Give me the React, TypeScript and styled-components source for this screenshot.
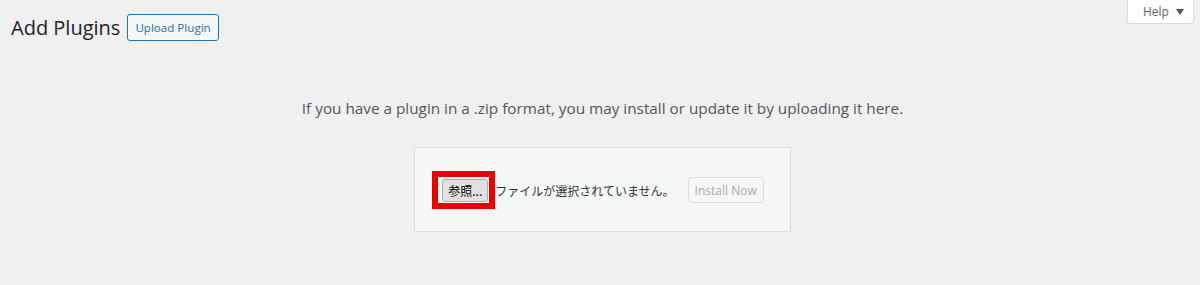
import styled, { createGlobalStyle } from "styled-components";
import type { FC } from "react";

const GlobalStyle = createGlobalStyle`
    body {
        margin: 0;
        background: #f0f0f1;
        font-family: "Open Sans", "Noto Sans CJK JP", sans-serif;
        color: #3c434a;
    }
`;

const Page = styled.div`
    padding: 0 6px 0 11px;
    height: 285px;
    box-sizing: border-box;
`;

const TopBar = styled.div`
    display: flex;
    justify-content: space-between;
    align-items: flex-start;
`;

const TitleGroup = styled.div`
    display: flex;
    align-items: center;
    gap: 7px;
    margin-top: 14px;
`;

const Heading = styled.h1`
    margin: 0;
    font-size: 20px;
    font-weight: 400;
    line-height: 27px;
    color: #1d2327;
`;

const OutlineButton = styled.button`
    height: 27px;
    padding: 0 7px;
    border: 1px solid #2271b1;
    border-radius: 3px;
    background: #f6f7f7;
    color: #2271b1;
    font-family: inherit;
    font-size: 11.6px;
    cursor: pointer;
`;

const HelpTab = styled.button`
    display: flex;
    align-items: center;
    gap: 7px;
    width: 67px;
    height: 24px;
    padding: 0 0 0 15px;
    border: 1px solid #dcdcde;
    border-top: none;
    border-radius: 0 0 4px 4px;
    background: #fff;
    color: #646970;
    font-family: inherit;
    font-size: 12px;
`;

const Caret = styled.span`
    width: 0;
    height: 0;
    border-left: 4px solid transparent;
    border-right: 4px solid transparent;
    border-top: 6px solid #50575e;
`;

const UploadSection = styled.div`
    display: flex;
    flex-direction: column;
    align-items: center;
    padding-top: 55px;
`;

const HelpText = styled.p`
    margin: 0;
    font-size: 15.3px;
    line-height: 24px;
    color: #50575e;
`;

const UploadForm = styled.form`
    display: flex;
    align-items: center;
    margin-top: 27px;
    padding: 29px 26px 28px 27px;
    background: #f6f7f7;
    border: 1px solid #dcdcde;
`;

const Highlight = styled.span`
    position: relative;
    display: inline-flex;

    &::after {
        content: "";
        position: absolute;
        left: -10px;
        right: -7px;
        top: -8px;
        bottom: -7px;
        border: 6px solid #ee0000;
        pointer-events: none;
    }
`;

const BrowseButton = styled.button`
    width: 46px;
    height: 23px;
    padding: 0;
    border: 1px solid #adadad;
    border-radius: 3px;
    background: #e1e1e1;
    color: #000;
    font-family: "Noto Sans CJK JP", sans-serif;
    font-size: 12px;
`;

const FileStatus = styled.span`
    margin-left: 7px;
    font-family: "Noto Sans CJK JP", sans-serif;
    font-size: 12px;
    color: #2c3338;
`;

const DisabledButton = styled.button`
    margin-left: 13px;
    height: 26px;
    padding: 0 6px;
    border: 1px solid #dcdcde;
    border-radius: 3px;
    background: #f6f7f7;
    color: #a7aaad;
    font-family: "Open Sans", sans-serif;
    font-size: 12px;
`;

const App: FC = () => (
    <>
        <GlobalStyle />
        <Page>
            <TopBar>
                <TitleGroup>
                    <Heading>Add Plugins</Heading>
                    <OutlineButton type="button">Upload Plugin</OutlineButton>
                </TitleGroup>
                <HelpTab type="button">
                    Help <Caret />
                </HelpTab>
            </TopBar>
            <UploadSection>
                <HelpText>
                    If you have a plugin in a .zip format, you may install or
                    update it by uploading it here.
                </HelpText>
                <UploadForm>
                    <Highlight>
                        <BrowseButton type="button">参照...</BrowseButton>
                    </Highlight>
                    <FileStatus>ファイルが選択されていません。</FileStatus>
                    <DisabledButton type="button" disabled>
                        Install Now
                    </DisabledButton>
                </UploadForm>
            </UploadSection>
        </Page>
    </>
);

export default App;
